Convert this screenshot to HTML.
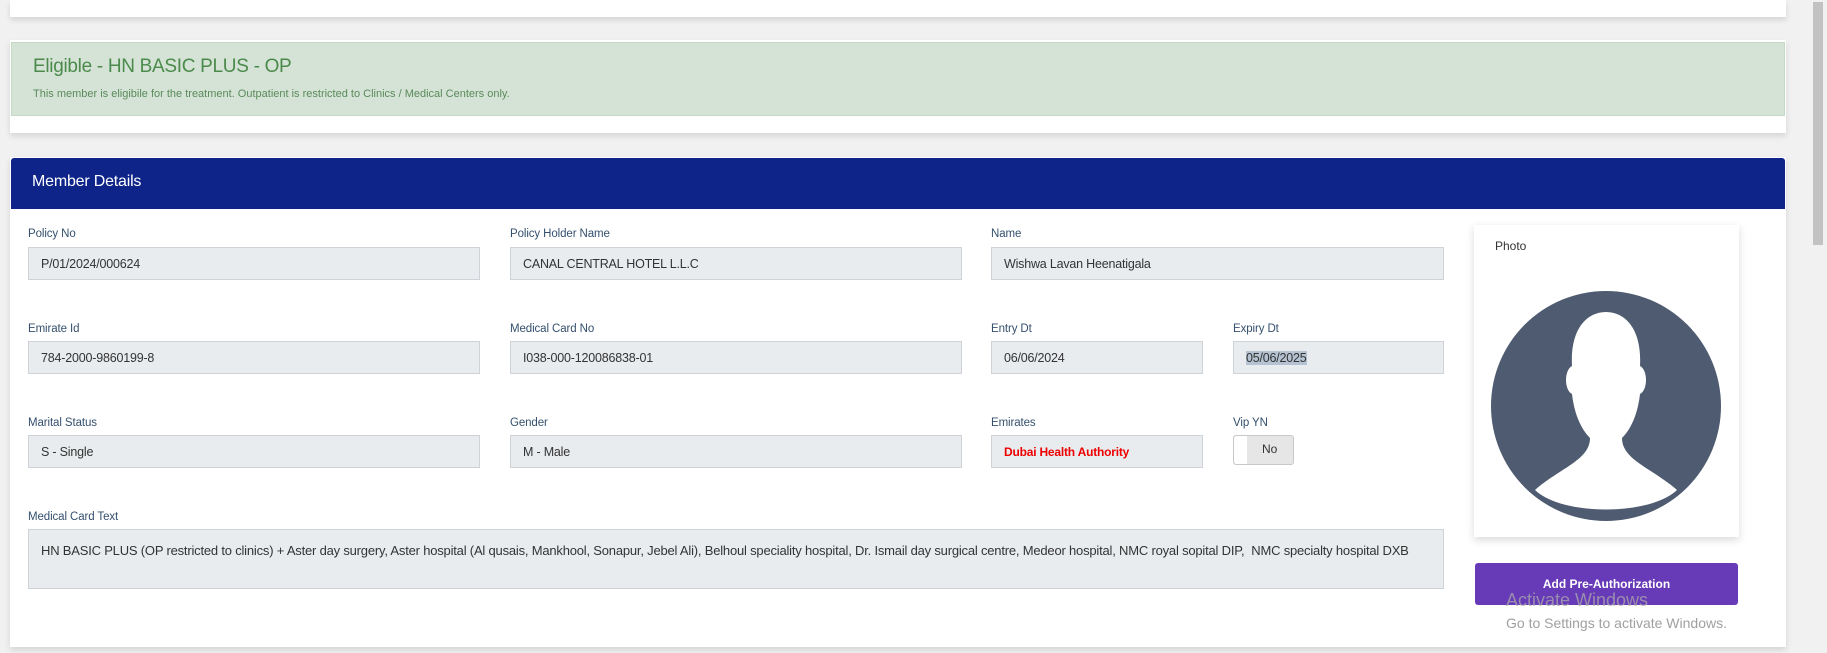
<!DOCTYPE html>
<html><head><meta charset="utf-8"><style>
*{box-sizing:border-box;margin:0;padding:0}
body{width:1827px;height:653px;overflow:hidden;background:#f1f1f1;font-family:"Liberation Sans",sans-serif;position:relative}
.abs{position:absolute}
.card{background:#fff;box-shadow:0 3px 6px rgba(0,0,0,.12)}
.lbl{position:absolute;font-size:11.5px;color:#34506e;letter-spacing:-0.1px}
.inp{position:absolute;background:#e9ecef;border:1px solid #cfd3d7;font-size:12.5px;color:#333;padding-left:12px;display:flex;align-items:center;letter-spacing:-0.2px}
</style></head><body>
<div class="abs card" style="left:10px;top:0;width:1776px;height:17px"></div>
<div class="abs" style="left:1811px;top:0;width:16px;height:653px;background:#f1f1f1"></div>
<div class="abs" style="left:1813px;top:2px;width:10px;height:243px;background:#c2c2c2"></div>

<div class="abs card" style="left:10px;top:40px;width:1776px;height:93px"></div>
<div class="abs" style="left:11px;top:42px;width:1774px;height:74px;background:#d4e3d6;border:1px solid #c5d9c7"></div>
<div class="abs" style="left:33px;top:56px;font-size:19px;color:#4b8a4b;letter-spacing:-0.3px">Eligible - HN BASIC PLUS - OP</div>
<div class="abs" style="left:33px;top:88px;font-size:11px;color:#5a8a5a">This member is eligibile for the treatment. Outpatient is restricted to Clinics / Medical Centers only.</div>

<div class="abs card" style="left:10px;top:157px;width:1776px;height:490px"></div>
<div class="abs" style="left:11px;top:158px;width:1774px;height:51px;background:#0e2489;border-radius:3px 3px 0 0"></div>
<div class="abs" style="left:32px;top:173px;font-size:16px;color:#fff;letter-spacing:-0.2px">Member Details</div>

<div class="lbl" style="left:28px;top:228px">Policy No</div>
<div class="inp" style="left:28px;top:247px;width:452px;height:33px">P/01/2024/000624</div>
<div class="lbl" style="left:510px;top:228px">Policy Holder Name</div>
<div class="inp" style="left:510px;top:247px;width:452px;height:33px">CANAL CENTRAL HOTEL L.L.C</div>
<div class="lbl" style="left:991px;top:228px">Name</div>
<div class="inp" style="left:991px;top:247px;width:453px;height:33px">Wishwa Lavan Heenatigala</div>

<div class="lbl" style="left:28px;top:323px">Emirate Id</div>
<div class="inp" style="left:28px;top:341px;width:452px;height:33px">784-2000-9860199-8</div>
<div class="lbl" style="left:510px;top:323px">Medical Card No</div>
<div class="inp" style="left:510px;top:341px;width:452px;height:33px">I038-000-120086838-01</div>
<div class="lbl" style="left:991px;top:323px">Entry Dt</div>
<div class="inp" style="left:991px;top:341px;width:212px;height:33px">06/06/2024</div>
<div class="lbl" style="left:1233px;top:323px">Expiry Dt</div>
<div class="inp" style="left:1233px;top:341px;width:211px;height:33px"><span style="background:#b4c2d2">05/06/2025</span></div>

<div class="lbl" style="left:28px;top:417px">Marital Status</div>
<div class="inp" style="left:28px;top:435px;width:452px;height:33px">S - Single</div>
<div class="lbl" style="left:510px;top:417px">Gender</div>
<div class="inp" style="left:510px;top:435px;width:452px;height:33px">M - Male</div>
<div class="lbl" style="left:991px;top:417px">Emirates</div>
<div class="inp" style="left:991px;top:435px;width:212px;height:33px;color:#e00;font-weight:bold;font-size:12px">Dubai Health Authority</div>
<div class="lbl" style="left:1233px;top:417px">Vip YN</div>
<div class="abs" style="left:1233px;top:435px;width:61px;height:30px;background:#e6e6e6;border:1px solid #c8c8c8;border-radius:3px"><div class="abs" style="left:0;top:0;width:13px;height:28px;background:#fff;border-radius:3px 0 0 3px"></div><div class="abs" style="left:28px;top:6px;font-size:12px;color:#333">No</div></div>

<div class="lbl" style="left:28px;top:511px">Medical Card Text</div>
<div class="inp" style="left:28px;top:529px;width:1416px;height:60px;align-items:flex-start;padding-top:13px;font-size:13px;letter-spacing:-0.2px;white-space:nowrap">HN BASIC PLUS (OP restricted to clinics) + Aster day surgery, Aster hospital (Al qusais, Mankhool, Sonapur, Jebel Ali), Belhoul speciality hospital, Dr. Ismail day surgical centre, Medeor hospital, NMC royal sopital DIP,&nbsp; NMC specialty hospital DXB</div>

<div class="abs" style="left:1474px;top:225px;width:265px;height:312px;background:#fff;box-shadow:0 3px 8px rgba(0,0,0,.15)"></div>
<div class="abs" style="left:1495px;top:239px;font-size:12px;color:#333">Photo</div>
<svg class="abs" style="left:1490px;top:290px" width="232" height="232" viewBox="0 0 232 232">
<circle cx="116" cy="116" r="115" fill="#4e5b70"/>
<path d="M45 200 C70 178 100 170 100 148 C90 138 84 122 82 104 C74 100 74 80 82 76 C80 40 96 22 116 22 C136 22 152 40 150 76 C158 80 158 100 150 104 C148 122 142 138 132 148 C132 170 162 178 187 200 C160 226 72 226 45 200Z" fill="#fff"/>
</svg>
<div class="abs" style="left:1475px;top:563px;width:263px;height:42px;background:#673ab7;border-radius:3px;color:#fff;font-size:12px;font-weight:bold;text-align:center;line-height:42px">Add Pre-Authorization</div>
<div class="abs" style="left:1506px;top:590px;font-size:18px;color:rgba(170,170,170,.75)">Activate Windows</div>
<div class="abs" style="left:1506px;top:615px;font-size:14px;color:#a0a0a0">Go to Settings to activate Windows.</div>
</body></html>
